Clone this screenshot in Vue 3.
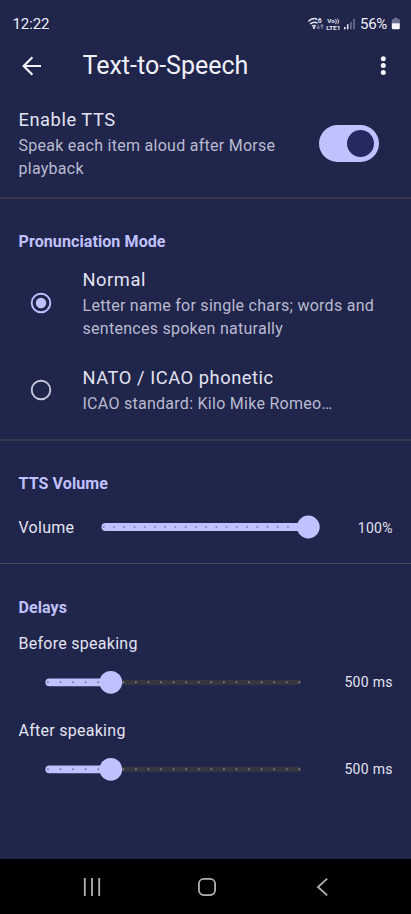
<script setup>
import { ref } from 'vue'

const enabled = ref(true)
const mode = ref('normal')
const modes = [
  { id: 'normal', title: 'Normal', lines: ['Letter name for single chars; words and', 'sentences spoken naturally'] },
  { id: 'nato', title: 'NATO / ICAO phonetic', lines: ['ICAO standard: Kilo Mike Romeo…'] },
]
const delays = [
  { label: 'Before speaking', value: '500 ms' },
  { label: 'After speaking', value: '500 ms' },
]
const ticks = Array.from({ length: 21 }, (_, i) => i)
</script>

<template>
  <div class="screen">
    <div class="status">
      <span class="clock">12:22</span>
      <svg class="signals" width="50" height="18" viewBox="0 0 50 18">
        <g fill="none" stroke="#e4e5f3" stroke-width="1.4">
          <path d="M.4 6.4Q4.9 1.8 9.4 4.6" />
          <path d="M2.2 9Q5.5 5.8 9.6 8.2" />
          <path d="M4.1 11.2Q6 9.6 7.9 11.2" />
        </g>
        <circle cx="6" cy="12.8" r="1.2" fill="#e4e5f3" />
        <text x="9.7" y="8" class="six">6</text>
        <g stroke="#777b9a" stroke-width="1.2" fill="none">
          <path d="M10.3 9.5V13.5M8.8 12L10.3 13.8L11.8 12M14 14V10M12.5 11.4L14 9.7L15.5 11.4" />
        </g>
        <text x="19.3" y="7.8" class="tiny" textLength="12" lengthAdjust="spacingAndGlyphs">Vo))</text>
        <text x="18.2" y="15.1" class="tiny" textLength="14.4" lengthAdjust="spacingAndGlyphs">LTE1</text>
        <path d="M36.8 12V14.3M39.7 9.2V14.3" stroke="#e4e5f3" stroke-width="1.6" />
        <path d="M42.9 7V14.3M46 4V14.3" stroke="#6c7092" stroke-width="1.6" />
      </svg>
      <span class="percent">56%</span>
      <svg class="battery" width="10" height="14" viewBox="0 0 10 14">
        <path d="M3 1.2Q3 .7 3.5 .7H6Q6.5 .7 6.5 1.2V2H7.6Q8.8 2 8.8 3.2V6.5H.8V3.2Q.8 2 2 2H3Z" fill="#6c7092" />
        <path d="M.8 6.3H8.8V11Q8.8 12.3 7.6 12.3H2Q.8 12.3 .8 11Z" fill="#f4f4fa" />
      </svg>
    </div>

    <header class="appbar">
      <svg class="back" width="20" height="20" viewBox="0 0 20 20">
        <path d="M19 10H2.3M10.4 1.3L1.7 10L10.4 18.7" fill="none" stroke="#f2f2fa" stroke-width="2.2" />
      </svg>
      <h1>Text-to-Speech</h1>
      <svg class="more" width="6" height="20" viewBox="0 0 6 20">
        <circle cx="3.3" cy="2.7" r="2.5" /><circle cx="3.3" cy="9.6" r="2.5" /><circle cx="3.3" cy="16.5" r="2.5" />
      </svg>
    </header>

    <section class="enable">
      <div>
        <div class="title">Enable TTS</div>
        <div class="body">Speak each item aloud after Morse<br />playback</div>
      </div>
      <button class="switch" :class="{ on: enabled }" aria-label="Enable TTS" @click="enabled = !enabled">
        <span class="knob"></span>
      </button>
    </section>

    <section class="modes">
      <h2>Pronunciation Mode</h2>
      <div v-for="m in modes" :key="m.id" class="option" :class="m.id" @click="mode = m.id">
        <svg class="radio" width="22" height="22" viewBox="0 0 22 22">
          <circle cx="11" cy="11" r="9.3" fill="none" :stroke="mode === m.id ? '#c0c2ff' : '#c5c6dc'" stroke-width="1.9" />
          <circle v-if="mode === m.id" cx="11" cy="11" r="5.2" fill="#c0c2ff" />
        </svg>
        <div>
          <div class="title">{{ m.title }}</div>
          <div v-for="line in m.lines" :key="line" class="body">{{ line }}</div>
        </div>
      </div>
    </section>

    <section class="volume">
      <h2>TTS Volume</h2>
      <div class="row">
        <span class="label">Volume</span>
        <svg width="220" height="24" viewBox="0 0 220 24">
          <rect x=".5" y="8" width="210" height="8" rx="4" fill="#c0c2ff" />
          <circle v-for="i in ticks" :key="i" :cx="2.8 + i * 10.23" cy="12" r="1" fill="#8486bd" />
          <circle cx="207.3" cy="12" r="11.4" fill="#c0c2ff" />
        </svg>
        <span class="value">100%</span>
      </div>
    </section>

    <section class="delays">
      <h2>Delays</h2>
      <div v-for="d in delays" :key="d.label" class="delay">
        <div class="label">{{ d.label }}</div>
        <div class="row">
          <svg width="258" height="24" viewBox="0 0 258 24">
            <rect x="60" y="9.7" width="196" height="5.2" rx="2" fill="#36363f" />
            <rect x=".4" y="8.4" width="68" height="7.8" rx="3.9" fill="#c0c2ff" />
            <circle
              v-for="i in ticks" :key="i" :cx="2.9 + i * 12.57" cy="12.3" r="1"
              :fill="i < 5 ? '#7476a8' : '#808086'"
            />
            <circle cx="65.8" cy="12.3" r="11.4" fill="#c0c2ff" />
          </svg>
          <span class="value">{{ d.value }}</span>
        </div>
      </div>
    </section>

    <nav class="navbar">
      <svg width="18" height="18" viewBox="0 0 18 18"><path d="M1.8 0V18M9 0V18M16.2 0V18" /></svg>
      <svg width="18" height="18" viewBox="0 0 18 18"><rect x=".9" y=".9" width="16.2" height="16.2" rx="5" /></svg>
      <svg width="18" height="18" viewBox="0 0 18 18"><path d="M14.2 .7L5 9L14.2 17.3" /></svg>
    </nav>
  </div>
</template>

<style>
body {
  margin: 0;
  background: #20254b;
}
</style>

<style scoped>
.screen {
  width: 411px;
  height: 914px;
  box-sizing: border-box;
  display: flex;
  flex-direction: column;
  background: #20254b;
  color: #e3e3f2;
  font-family: Roboto, "Liberation Sans", sans-serif;
  overflow: hidden;
}
.status {
  height: 40px;
  flex: none;
  box-sizing: border-box;
  padding: 7px 10.5px 0 12.5px;
  display: flex;
  align-items: center;
  color: #eeeef8;
}
.clock {
  font-size: 15px;
  letter-spacing: -0.1px;
  flex: 1;
}
.signals {
  margin-right: 2.5px;
}
.six {
  font-size: 7px;
  font-weight: 700;
  fill: #e4e5f3;
}
.tiny {
  font-size: 6.2px;
  font-weight: 700;
  fill: #e4e5f3;
}
.percent {
  font-size: 15px;
  width: 30px;
  letter-spacing: -0.3px;
}
.battery {
  margin-left: 0.5px;
}
.appbar {
  height: 52px;
  flex: none;
  display: flex;
  align-items: center;
  padding: 0 25px 0 22px;
}
.appbar h1 {
  flex: 1;
  margin: 0 0 0 40.5px;
  font-size: 25px;
  font-weight: 400;
  line-height: 32px;
  color: #f0f0fa;
}
.more {
  fill: #f4f4fa;
}
.enable {
  height: 107px;
  flex: none;
  box-sizing: border-box;
  border-bottom: 2px solid #3a3951;
  padding: 15px 32px 0 18.5px;
  display: flex;
  justify-content: space-between;
  align-items: flex-start;
}
.title {
  font-size: 18.3px;
  line-height: 25px;
  padding-bottom: 2px;
  letter-spacing: 0.55px;
  color: #e3e3f2;
}
.body {
  font-size: 16px;
  line-height: 23px;
  letter-spacing: 0.27px;
  color: #b9bad1;
  white-space: nowrap;
}
.switch {
  margin-top: 18px;
  width: 60px;
  height: 37px;
  border: 0;
  border-radius: 19px;
  padding: 0 5px;
  display: flex;
  align-items: center;
  background: #36363f;
}
.switch.on {
  justify-content: flex-end;
  background: #c0c2ff;
}
.knob {
  width: 27px;
  height: 27px;
  border-radius: 50%;
  background: #242a60;
}
h2 {
  margin: 0;
  font-size: 16px;
  font-weight: 700;
  line-height: 24px;
  letter-spacing: 0.1px;
  color: #c0c2ff;
}
.modes {
  height: 242px;
  flex: none;
  box-sizing: border-box;
  border-bottom: 2px solid #363851;
  padding: 31px 18px 0 18.5px;
}
.option {
  display: flex;
  align-items: center;
  gap: 30.5px;
  padding-left: 11.5px;
}
.option.normal {
  margin-top: 12.5px;
}
.option.nato {
  margin-top: 25.5px;
}
.volume {
  height: 123px;
  flex: none;
  box-sizing: border-box;
  border-bottom: 1px solid #454653;
  padding: 31.4px 18.5px 0;
}
.row {
  display: flex;
  align-items: center;
}
.volume .row {
  margin-top: 19.6px;
}
.volume .row svg {
  margin-top: -2px;
}
.label {
  font-size: 16px;
  line-height: 24px;
  letter-spacing: 0.27px;
}
.volume .label {
  width: 82px;
}
.value {
  margin-left: auto;
  font-size: 14px;
  letter-spacing: 0.3px;
  margin-right: -0.3px;
}
.delays {
  flex: 1;
  padding: 32px 18.5px 0;
}
.delay {
  height: 87px;
}
.delay:nth-of-type(1) {
  margin-top: 12.4px;
}
.delay .row {
  margin: 13.6px 0 0 26px;
}
.navbar {
  height: 55px;
  flex: none;
  background: #000;
  display: flex;
  align-items: center;
  justify-content: space-between;
  padding: 0 80px 0 83px;
}
.navbar svg {
  fill: none;
  stroke: #b2b2b2;
  stroke-width: 1.8;
}
</style>
